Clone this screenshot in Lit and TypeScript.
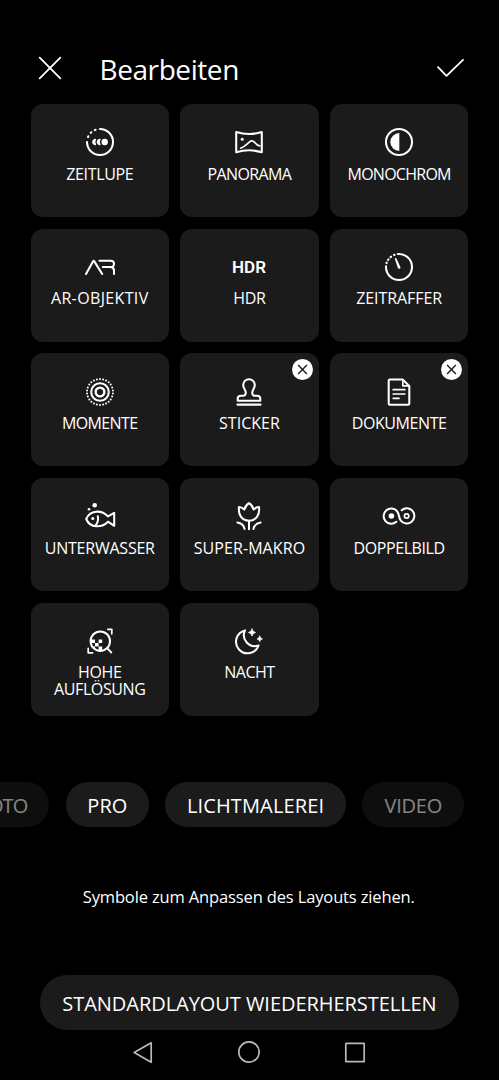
import { LitElement, html, svg, css, nothing } from "lit";
import { customElement } from "lit/decorators.js";

interface Mode {
  icon: string;
  lines: string[];
  tracking: number;
  removable?: boolean;
}

const MODES: Mode[] = [
  { icon: "slow", lines: ["ZEITLUPE"], tracking: -0.33 },
  { icon: "panorama", lines: ["PANORAMA"], tracking: -0.62 },
  { icon: "mono", lines: ["MONOCHROM"], tracking: -0.74 },
  { icon: "ar", lines: ["AR-OBJEKTIV"], tracking: 0.36 },
  { icon: "hdr", lines: ["HDR"], tracking: -0.3 },
  { icon: "lapse", lines: ["ZEITRAFFER"], tracking: -0.08 },
  { icon: "moments", lines: ["MOMENTE"], tracking: -0.6 },
  { icon: "stamp", lines: ["STICKER"], tracking: 0, removable: true },
  { icon: "doc", lines: ["DOKUMENTE"], tracking: -0.42, removable: true },
  { icon: "fish", lines: ["UNTERWASSER"], tracking: -0.22 },
  { icon: "tulip", lines: ["SUPER-MAKRO"], tracking: 0.08 },
  { icon: "dual", lines: ["DOPPELBILD"], tracking: -0.42 },
  { icon: "hires", lines: ["HOHE", "AUFLÖSUNG"], tracking: -0.4 },
  { icon: "night", lines: ["NACHT"], tracking: -0.5 },
];

const ring = Array.from({ length: 26 }, (_, i) => {
  const a = (i / 26) * Math.PI * 2;
  return svg`<circle class="solid" cx=${(13 * Math.sin(a)).toFixed(2)} cy=${(-13 * Math.cos(a)).toFixed(2)} r="1"/>`;
});

// Glyphs are drawn around the origin of a 36 x 36 box.
const ICONS: Record<string, unknown> = {
  slow: svg`
    <path d="M0-13A13 13 0 1 1-13 0"/>
    <path d="M-5.3-11.9L-4.4-12.2M-9.3-9.1L-8.7-9.7M-12-5L-11.7-5.7"/>
    <path class="solid" d="M-3.8-3.1A3.2 3.2 0 1 0-3.8 3.1Q-5.6 0-3.8-3.1ZM.7-3.1A3.2 3.2 0 1 0 .7 3.1Q-1.1 0 .7-3.1Z"/>
    <circle class="solid" cx="4.7" cy="0" r="3.2"/>`,
  panorama: svg`
    <path d="M-12.8-10Q0-6 12.8-10V10.3Q0 6.3-12.8 10.3Z"/>
    <circle class="solid" cx="-6.8" cy="-2.8" r="1.5"/>
    <path class="fine" d="M-8.4 6.2C-4 5-1.6 1.6.6-.2Q3.4-2.2 5.8.6Q8 3.6 11 4"/>`,
  mono: svg`
    <circle cx="0" cy="0" r="13"/>
    <path class="solid" d="M.3-9A9 9 0 0 0 .3 9Z"/>`,
  ar: svg`
    <path d="M-14 7L-7-5.6Q-6.4-6.7-5.7-5.6L2.2 7M-.5-6.3H10.5Q14-6.3 14-3.2Q14 0 10.5 0H2.8M10.5 0Q14 .2 14 3.5V7"/>`,
  hdr: svg`<text x="0" y="6" text-anchor="middle" textLength="34" lengthAdjust="spacing">HDR</text>`,
  lapse: svg`
    <path d="M-1.2-13H0A13 13 0 1 1-13 0V-.8"/>
    <path d="M-5-12L-4.4-12.2M-8.4-9.9L-7.9-10.3M-10.9-7.1L-10.5-7.6M-12.5-3.9L-12.3-4.4"/>
    <path class="solid" d="M-4.3-8.4Q-3.6-9.4-2.7-8.8L1.5.2Q1.5 1.8 0 1.7Q-.9 1.6-1.2.8Z"/>`,
  moments: svg`${ring}
    <circle cx="0" cy="0" r="8.8"/>
    <circle class="thick" cx="0" cy="0" r="4.4"/>`,
  stamp: svg`
    <path d="M-11.3 8.7V6.6Q-11.3 3.7-8 3.7H-5.5Q-3.5 3.7-3.2 1C-3-2-5.8-3.5-5.8-7A5.8 5.8 0 0 1 5.8-7C5.8-3.5 3-2 3.2 1Q3.5 3.7 5.5 3.7H8Q11.3 3.7 11.3 6.6V8.7Z"/>
    <path d="M-11.6 12.6H11.6"/>`,
  doc: svg`
    <path d="M-9-12.6H3.6L10.3-6V11.6Q10.3 12.8 9 12.8H-9Q-10.3 12.8-10.3 11.6V-11.4Q-10.3-12.6-9-12.6Z"/>
    <path class="fine" d="M3.8-12V-6.2H10M-5.8-2.3H5.8M-5.8 2H5.8M-5.8 6.3H0"/>`,
  fish: svg`
    <path d="M-13.8 3C-10-6.2 1.4-6.5 8 .4L14.2-3.2V9.8L8 5.7C1.4 12.2-10 12.2-13.8 3Z"/>
    <path d="M-2.2.2Q-1.2 5-4 8.8"/>
    <circle class="solid" cx="-7.2" cy="2.4" r="1.5"/>
    <circle class="solid" cx="-5.3" cy="-10.8" r="2.3"/>
    <circle class="solid" cx="-11" cy="-6.8" r="1.3"/>`,
  tulip: svg`
    <path d="M0 4.7C-7.4 4.7-11-1.4-10-9Q-6.8-8.7-4.6-6.4Q-3.6-10.6 0-12.8Q3.6-10.6 4.6-6.4Q6.8-8.7 10-9C11-1.4 7.4 4.7 0 4.7Z"/>
    <path d="M0 4.7V13.3M-11.6 6.6Q-5.6 7.6-4.4 13M11.6 6.6Q5.6 7.6 4.4 13"/>`,
  dual: svg`
    <path d="M-2.7 5.8A7.6 7.6 0 1 1-1.8-4.6Q-.4-2.6 0 0Q.4 2.6 1.8 4.6A7.6 7.6 0 1 0 2.7-5.8"/>
    <circle class="solid" cx="-7.6" cy="0" r="2.8"/>
    <circle class="fine" cx="7.6" cy="0" r="2.2"/>`,
  hires: svg`
    <circle cx=".3" cy=".2" r="9.7"/>
    <path d="M7.6 7.6L11.2 11.4"/>
    <path class="fine" d="M7.8-11.7H11.8V-7.2M-11.8 7.4V11.8H-7.4"/>
    <path class="solid" d="M-9-1.6H-5V2H-9ZM-1.4-1.6H2.2V2H-1.4ZM-5 2H-1.4V5.4H-5ZM-1.4 5.4H2.2V9H-1.4ZM-7.5 5.4H-5V7.6Z"/>`,
  night: svg`
    <path d="M-4-10.6A11.6 11.6 0 1 0 9.6 4.5A11 11 0 0 1-4-10.6Z"/>
    <path class="solid star" d="M3-12Q3.5-9 6.5-8.5Q3.5-8 3-5Q2.5-8-.5-8.5Q2.5-9 3-12ZM10.7-4.8Q11.1-2.5 13.4-2.1Q11.1-1.7 10.7.6Q10.3-1.7 8-2.1Q10.3-2.5 10.7-4.8Z"/>`,
};

@customElement("mode-tile")
class ModeTile extends LitElement {
  static properties = { mode: { attribute: false } };
  declare mode: Mode;

  static styles = css`
    :host {
      display: flex;
      flex-direction: column;
      align-items: center;
      position: relative;
      box-sizing: border-box;
      height: 113px;
      padding-top: 20.3px;
      border-radius: 12px;
      background: #1b1b1b;
    }
    .glyph {
      width: 36px;
      height: 36px;
      flex: none;
      fill: none;
      stroke: #fff;
      stroke-width: 2.05;
      stroke-linecap: round;
      stroke-linejoin: round;
      overflow: visible;
    }
    .solid { fill: #fff; stroke: none; }
    .star { stroke: #fff; stroke-width: 0.8; }
    .fine { stroke-width: 1.7; }
    .thick { stroke-width: 2.4; }
    text {
      font: 600 17px Roboto, sans-serif;
      fill: #fff;
      stroke: none;
    }
    .label {
      margin-top: 5.3px;
      font-size: 16px;
      line-height: 17.2px;
      text-align: center;
      white-space: nowrap;
    }
    .line { display: block; }
    .badge {
      position: absolute;
      top: 5.8px;
      right: 6.2px;
      width: 21px;
      height: 21px;
    }
    .disc { fill: #fff; }
    .cross { stroke: #1b1b1b; stroke-width: 1.4; fill: none; }
  `;

  render() {
    const m = this.mode;
    return html`
      <svg class="glyph" viewBox="-18 -18 36 36">${ICONS[m.icon]}</svg>
      <div class="label" style="letter-spacing:${m.tracking}px">
        ${m.lines.map((l) => html`<span class="line">${l}</span>`)}
      </div>
      ${m.removable
        ? html`<svg class="badge" viewBox="-10.5 -10.5 21 21">
            <circle class="disc" r="10.5" />
            <path class="cross" d="M-4.4-4.4L4.4 4.4M4.4-4.4L-4.4 4.4" />
          </svg>`
        : nothing}
    `;
  }
}

@customElement("app-root")
class AppRoot extends LitElement {
  static styles = css`
    :host {
      display: flex;
      flex-direction: column;
      box-sizing: border-box;
      width: 499px;
      height: 1080px;
      overflow: hidden;
      background: #000;
      color: #fff;
      font-family: "Open Sans", sans-serif;
    }
    .header {
      display: flex;
      align-items: center;
      height: 70px;
      padding: 34px 34px 0 37px;
    }
    .header svg, .nav svg { fill: none; stroke-linecap: round; stroke-linejoin: round; }
    .header svg { stroke: #fff; stroke-width: 1.8; flex: none; }
    .close, .done { margin-top: -2px; }
    .title {
      flex: 1;
      margin: 0 0 0 36.5px;
      font-size: 28px;
      font-weight: 400;
      line-height: 38px;
      letter-spacing: -0.42px;
    }
    .grid {
      display: grid;
      grid-template-columns: repeat(3, 138.5px);
      column-gap: 11.2px;
      row-gap: 11.6px;
      padding: 0 30.5px;
      height: 611.6px;
    }
    .chips {
      display: flex;
      justify-content: flex-end;
      gap: 16.5px;
      margin-top: 66.8px;
      padding-right: 34.7px;
      overflow: hidden;
    }
    .chip {
      flex: none;
      box-sizing: border-box;
      height: 44.3px;
      padding: 2px 21px 0;
      border-radius: 22.2px;
      background: #1b1b1b;
      font-size: 20px;
      line-height: 44px;
      text-align: center;
      white-space: nowrap;
    }
    .dim { opacity: 0.52; }
    .photo { width: 99px; padding-right: 22px; text-align: right; letter-spacing: -0.9px; }
    .pro { width: 83px; }
    .light { width: 180.5px; letter-spacing: 0.14px; }
    .video { width: 102px; letter-spacing: -0.25px; }
    .hint {
      margin: 58.3px 1.5px 0 0;
      font-size: 16.5px;
      line-height: 24px;
      letter-spacing: -0.14px;
      text-align: center;
    }
    .reset {
      align-self: center;
      box-sizing: border-box;
      width: 419px;
      height: 55px;
      margin: 66px 0 0;
      padding: 2px 0 0;
      border: 0;
      border-radius: 27.5px;
      background: #1b1b1b;
      color: #fff;
      font: 20px/53px "Open Sans", sans-serif;
      letter-spacing: -0.05px;
      white-space: nowrap;
    }
    .nav {
      display: flex;
      justify-content: space-between;
      width: 234px;
      margin: 10.5px 0 0 131px;
    }
    .nav svg { width: 24px; height: 24px; stroke: #b9b9b9; stroke-width: 1.7; }
  `;

  render() {
    return html`
      <div class="header">
        <svg class="close" width="26" height="26" viewBox="0 0 26 26"><path d="M2.7 2.7L23.3 23.3M23.3 2.7L2.7 23.3" /></svg>
        <h1 class="title">Bearbeiten</h1>
        <svg class="done" width="30" height="26" viewBox="0 0 30 26"><path d="M3 12.2L11.5 20.8L28 4.8" /></svg>
      </div>
      <div class="grid">${MODES.map((m) => html`<mode-tile .mode=${m}></mode-tile>`)}</div>
      <div class="chips">
        <div class="chip photo dim">FOTO</div>
        <div class="chip pro">PRO</div>
        <div class="chip light">LICHTMALEREI</div>
        <div class="chip video dim">VIDEO</div>
      </div>
      <p class="hint">Symbole zum Anpassen des Layouts ziehen.</p>
      <button class="reset">STANDARDLAYOUT WIEDERHERSTELLEN</button>
      <div class="nav">
        <svg viewBox="0 0 24 24"><path d="M20.2 2.8V22.2L3.2 12.5Z" /></svg>
        <svg viewBox="0 0 24 24"><circle cx="13" cy="12" r="10.2" /></svg>
        <svg viewBox="0 0 24 24"><rect x="4.8" y="3.3" width="18.4" height="18.4" rx="0.5" /></svg>
      </div>
    `;
  }
}
